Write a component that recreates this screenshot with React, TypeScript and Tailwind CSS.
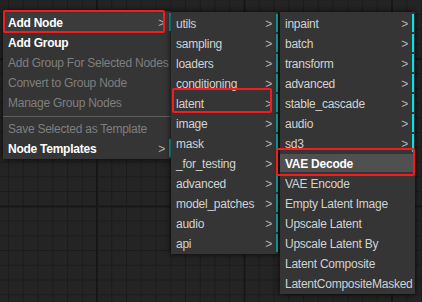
import { Fragment } from "react";

type Entry = {
  label: string;
  sub?: boolean;
  disabled?: boolean;
  strong?: boolean;
  active?: boolean;
  separatorBefore?: boolean;
  mark?: string;
};

const mainMenu: Entry[] = [
  {
    label: "Add Node",
    sub: true,
    strong: true,
    active: true,
    mark: "left-0 -top-[3px] right-[4px] -bottom-[2px]",
  },
  { label: "Add Group", strong: true },
  { label: "Add Group For Selected Nodes", disabled: true },
  { label: "Convert to Group Node", disabled: true },
  { label: "Manage Group Nodes", disabled: true },
  { label: "Save Selected as Template", disabled: true, separatorBefore: true },
  { label: "Node Templates", sub: true, strong: true },
];

const categoryMenu: Entry[] = [
  "utils",
  "sampling",
  "loaders",
  "conditioning",
  "latent",
  "image",
  "mask",
  "_for_testing",
  "advanced",
  "model_patches",
  "audio",
  "api",
].map((label) =>
  label === "latent"
    ? { label, sub: true, mark: "left-px -top-[6px] right-[4px] -bottom-px" }
    : { label, sub: true }
);

const latentMenu: Entry[] = [
  ...["inpaint", "batch", "transform", "advanced", "stable_cascade", "audio", "sd3"].map((label) => ({
    label,
    sub: true,
  })),
  {
    label: "VAE Decode",
    strong: true,
    active: true,
    mark: "-left-[4px] -top-[6px] -right-[1px] -bottom-[4px]",
  },
  { label: "VAE Encode" },
  { label: "Empty Latent Image" },
  { label: "Upscale Latent" },
  { label: "Upscale Latent By" },
  { label: "Latent Composite" },
  { label: "LatentCompositeMasked" },
];

function MenuRow({ entry, bar }: { entry: Entry; bar: string }) {
  const tone = entry.disabled
    ? "text-[#7f7f7f]"
    : entry.strong
      ? "text-white font-bold"
      : "text-[#d2d2d2]";
  const bg = entry.active ? (entry.sub ? "bg-[#3b3b3b]" : "bg-[#505050]") : "";
  return (
    <div
      className={`relative h-[18px] mb-[2px] pl-[5px] leading-[20px] whitespace-nowrap ${tone} ${bg} ${
        entry.sub ? `border-r-2 ${bar}` : ""
      }`}
    >
      {entry.label}
      {entry.sub && <span className="absolute right-[4px] top-0 text-[#b4b4b4] font-normal">&gt;</span>}
      {entry.mark && (
        <span className={`absolute ${entry.mark} border-2 border-[#f41c1c] rounded-[2px] pointer-events-none`} />
      )}
    </div>
  );
}

function Menu({ items, bar, className }: { items: Entry[]; bar: string; className: string }) {
  return (
    <div className={`flex flex-col bg-[#353535] pt-[2px] shadow-[0_0_6px_rgba(0,0,0,0.85)] ${className}`}>
      {items.map((entry) => (
        <Fragment key={entry.label}>
          {entry.separatorBefore && <div className="mt-[3px] mb-[2px] h-px bg-[#5e5e5e]" />}
          <MenuRow entry={entry} bar={bar} />
        </Fragment>
      ))}
    </div>
  );
}

export default function App() {
  return (
    <div className="w-[422px] h-[302px] overflow-hidden bg-[#242424] bg-[linear-gradient(to_right,#171717_2px,transparent_2px),linear-gradient(to_bottom,#171717_2px,transparent_2px),linear-gradient(to_right,#1c1c1c_1px,transparent_1px),linear-gradient(to_bottom,#1c1c1c_1px,transparent_1px)] bg-[size:147.5px_147.5px,147.5px_147.5px,14.75px_14.75px,14.75px_14.75px] bg-[position:96px_58px,96px_58px,8px_14px,8px_14px] font-['Liberation_Sans',Arial,sans-serif] text-[12px] tracking-[-0.25px]">
      <div className="flex items-start pl-[3px] pt-[11px]">
        <Menu items={mainMenu} bar="border-[#16a3a3]" className="w-[168px] z-10" />
        <Menu items={categoryMenu} bar="border-[#16a3a3]" className="w-[107px] mt-px z-20" />
        <Menu items={latentMenu} bar="border-[#00e4e4]" className="w-[135px] ml-[2px] mt-px pr-px z-30" />
      </div>
    </div>
  );
}
